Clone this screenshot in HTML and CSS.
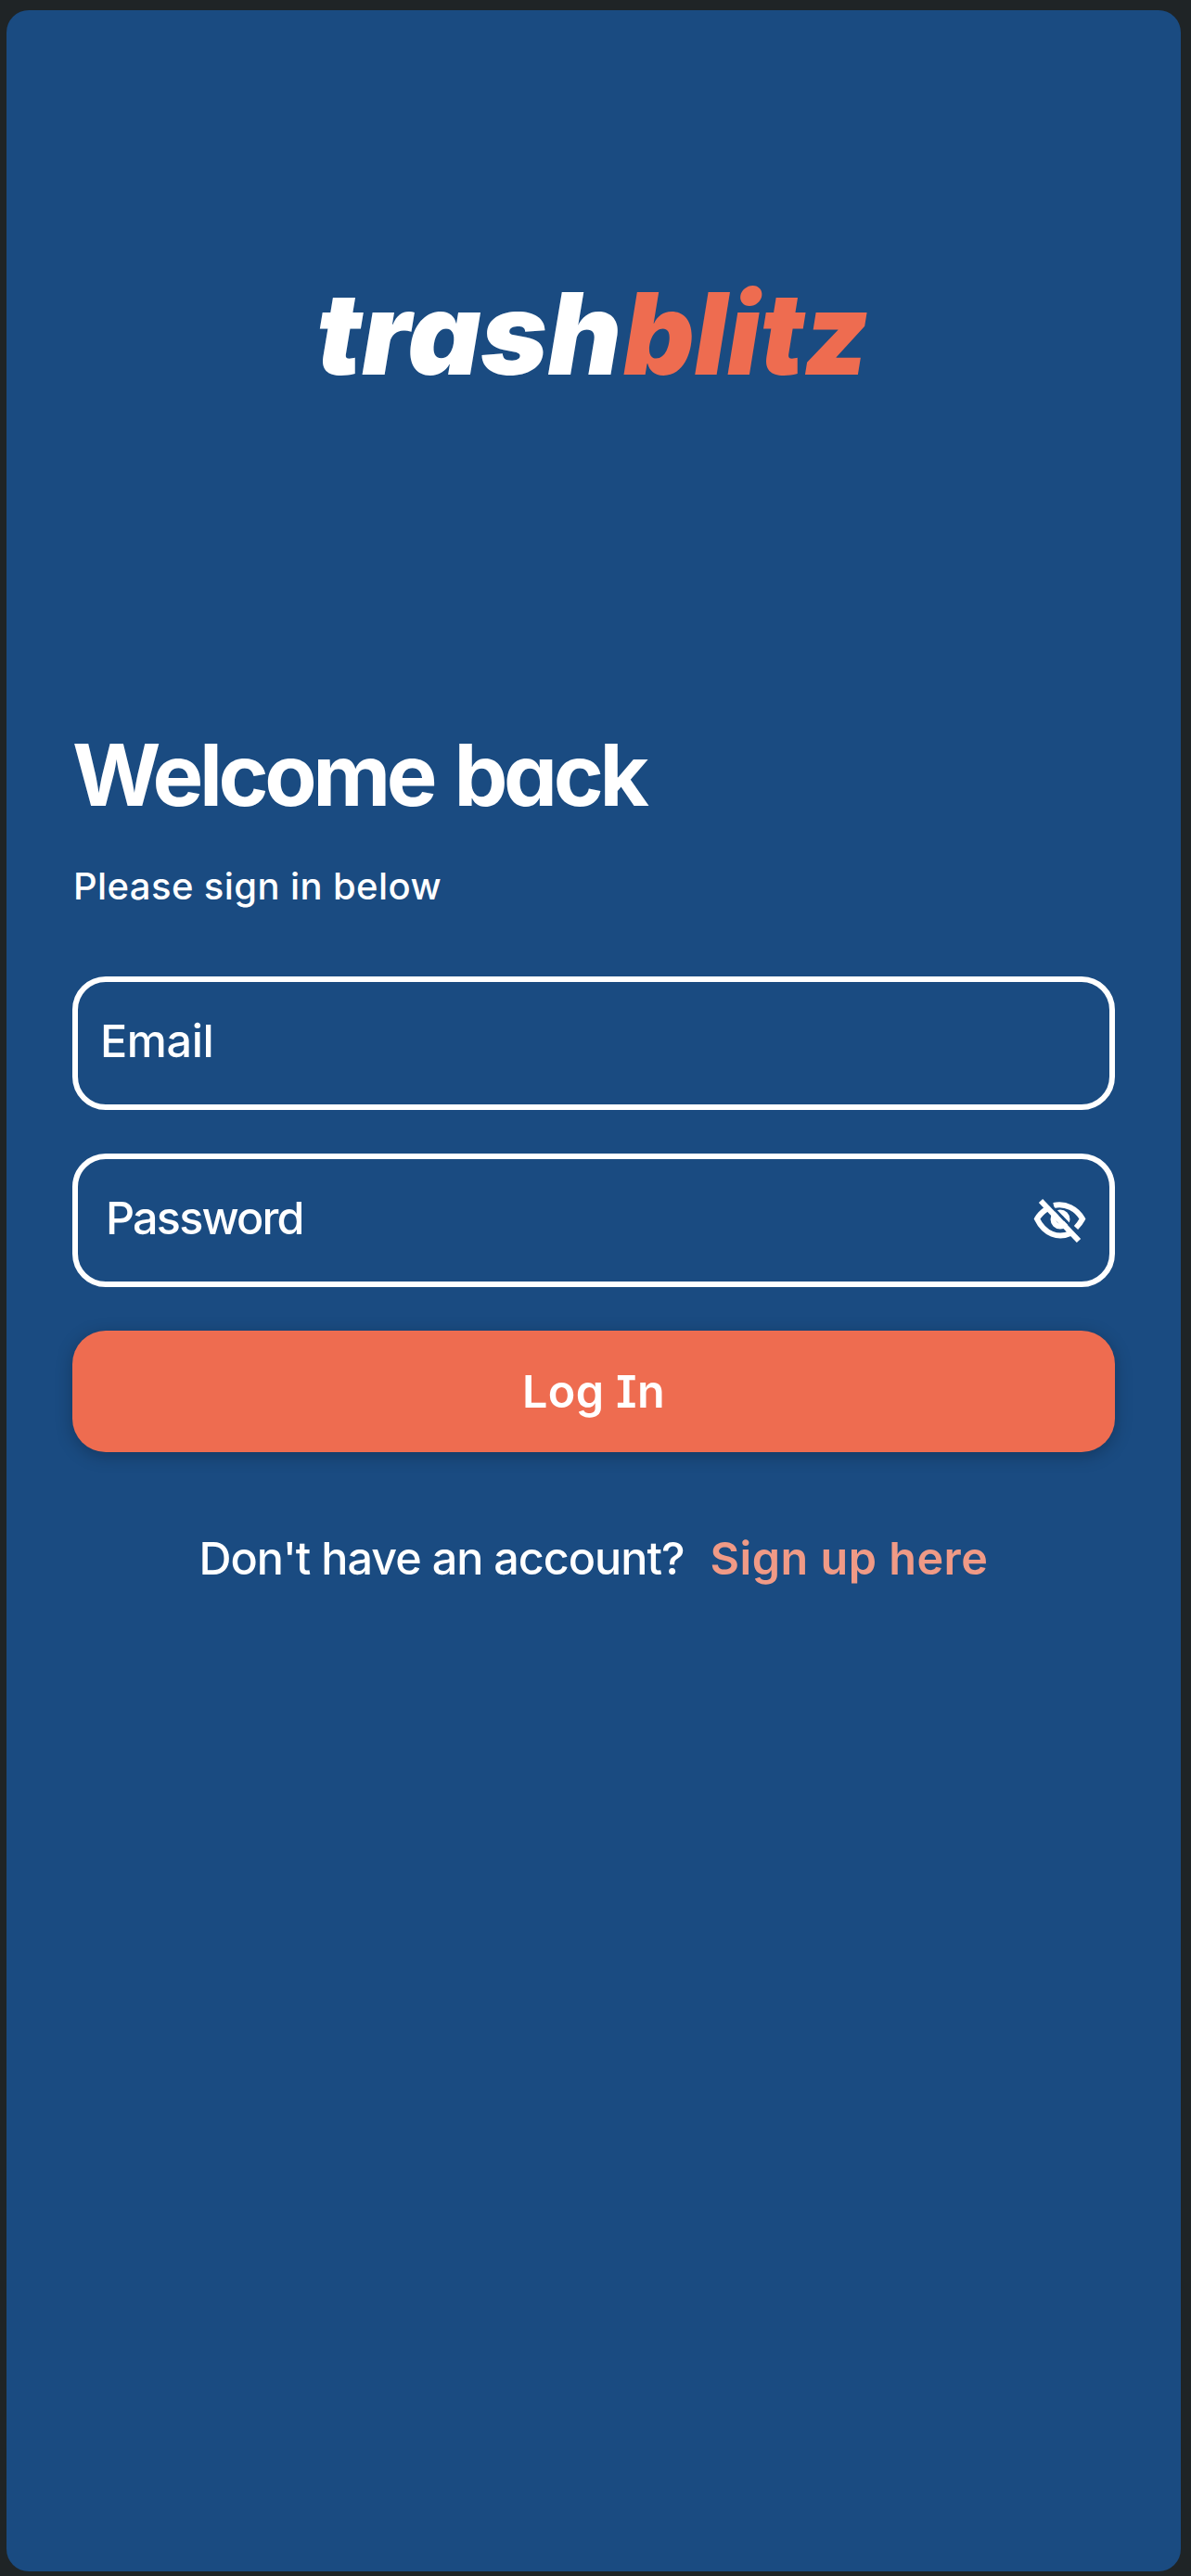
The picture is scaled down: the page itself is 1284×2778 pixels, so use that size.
FILE: index.html
```
<!DOCTYPE html>
<html lang="en">

<head>
    <meta charset="UTF-8">
    <meta name="viewport" content="width=device-width, initial-scale=1.0">
    <title>Trashblitz - Log In</title>
    <link rel="stylesheet" href="styles.css">
</head>

<body>
    <main class="screen">
        <svg class="logo" viewBox="0 0 620 180" role="img" aria-label="trashblitz">
            <text class="logo-white" x="1" y="134" textLength="329" lengthAdjust="spacingAndGlyphs">trash</text>
            <text class="logo-orange" x="332" y="134" textLength="265" lengthAdjust="spacingAndGlyphs">blitz</text>
        </svg>

        <h1>Welcome back</h1>
        <p class="subtitle">Please sign in below</p>

        <form id="loginForm">
            <div class="field">
                <input type="email" id="email" class="email" placeholder="Email">
            </div>
            <div class="field">
                <input type="password" id="password" class="password" placeholder="Password">
                <svg class="eye" viewBox="0 0 60 54">
                    <path d="M24 8C37 5 49 12 55 22.500Q52 28 48 32" />
                    <path d="M16 12Q9 17 6 22.500C14 39 29 44 42 38" />
                    <circle cx="31" cy="23" r="7.500" />
                    <path class="gap" d="M13 0L54 42" />
                    <path d="M10 3L51 46" />
                </svg>
            </div>
            <button type="submit" class="btn">Log In</button>
        </form>

        <div class="signup">
            <span>Don't have an account?</span>
            <a href="#">Sign up here</a>
        </div>
    </main>
</body>

</html>
```
FILE: styles.css
```
* {
    box-sizing: border-box;
}

body {
    margin: 0;
    height: 2778px;
    padding: 11px 11px 5px 7px;
    background: #1f2426;
    font-family: Inter, "Liberation Sans", sans-serif;
    color: #fff;
}

.screen {
    display: flex;
    flex-direction: column;
    height: 100%;
    padding: 259px 71px 0 71px;
    border-radius: 24px;
    background: #1a4b81;
}

.logo {
    width: 620px;
    height: 180px;
    margin-left: 262px;
    font-size: 123px;
    font-style: italic;
    font-weight: 900;
    font-feature-settings: "cv11";
}

.logo-white {
    fill: #fff;
}

.logo-orange {
    fill: #ee6c50;
}

h1 {
    margin: 330px 0 0;
    font-size: 92px;
    line-height: 112px;
    font-weight: 700;
    letter-spacing: -4.4px;
    word-spacing: 5px;
    font-feature-settings: "cv11";
}

.subtitle {
    margin: 39px 0 0;
    padding-left: 1px;
    font-size: 40px;
    line-height: 50px;
    font-weight: 500;
    letter-spacing: 0.4px;
}

form {
    display: flex;
    flex-direction: column;
    gap: 47px;
    margin-top: 72px;
}

.field {
    display: flex;
    align-items: center;
    height: 144px;
    padding-right: 24px;
    border: 6px solid #fff;
    border-radius: 36px;
}

.field input {
    flex: 1;
    min-width: 0;
    height: 60px;
    margin-bottom: 6px;
    border: 0;
    outline: 0;
    background: none;
    color: #fff;
    font: 500 48.5px Inter, sans-serif;
}

.field input::placeholder {
    color: #fff;
    opacity: 1;
}

.field .email {
    padding: 0 0 0 24px;
    letter-spacing: -0.4px;
}

.field .password {
    padding: 0 0 0 30px;
    letter-spacing: -1.8px;
}

.eye {
    width: 60px;
    height: 54px;
    margin-top: 6px;
    fill: none;
    stroke: #fff;
    stroke-width: 6;
}

.eye .gap {
    stroke: #1a4b81;
    stroke-width: 3;
}

.btn {
    height: 131px;
    padding: 0;
    border: none;
    border-radius: 36px;
    background-color: #ee6c50;
    box-shadow: 0 4px 18px rgba(0, 0, 0, 0.25);
    color: #fff;
    font: 600 48.5px Inter, sans-serif;
    font-feature-settings: "cv08";
    letter-spacing: 0.4px;
    cursor: pointer;
}

.signup {
    display: flex;
    justify-content: center;
    gap: 28px;
    margin-top: 85px;
    font-size: 48.5px;
    line-height: 60px;
    font-weight: 500;
    letter-spacing: -1px;
}

.signup a {
    color: #f09a86;
    font-weight: 600;
    letter-spacing: 0.5px;
    text-decoration: none;
}
```
